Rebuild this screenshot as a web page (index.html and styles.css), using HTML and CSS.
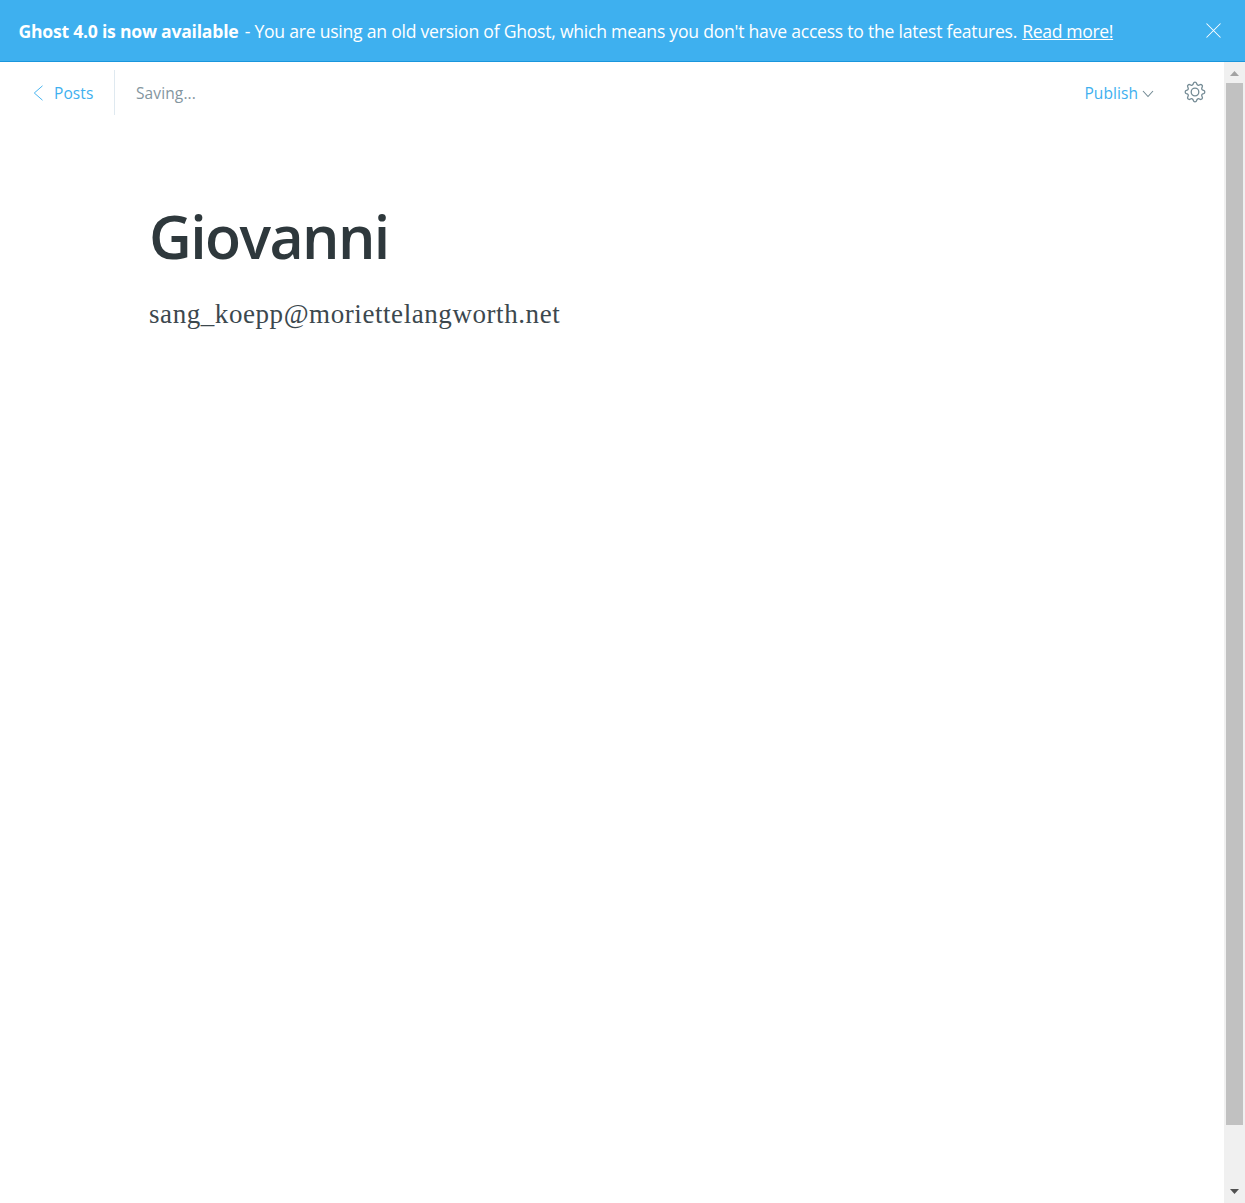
FILE: index.html
```html
<!DOCTYPE html>
<html lang="en">
<head>
<meta charset="utf-8">
<title>Giovanni - Ghost editor</title>
<link rel="stylesheet" href="styles.css">
</head>
<body>
<aside class="alert">
  <p class="alert-text"><strong class="alert-lead">Ghost 4.0 is now available</strong> <span class="alert-body">- You are using an old version of Ghost, which means you don't have access to the latest features.</span> <a class="alert-link" href="#">Read more!</a></p>
  <button class="alert-close" aria-label="Close"><svg width="17" height="17" viewBox="0 0 17 17"><path d="M1.5 1.5l14 14M15.5 1.5l-14 14"/></svg></button>
</aside>
<div class="viewport">
  <main class="editor">
    <header class="toolbar">
      <a class="back" href="#"><svg class="back-icon" width="11" height="16" viewBox="0 0 11 16"><path d="M9.5 .8L1.3 8l8.2 7.2"/></svg><span class="label">Posts</span></a>
      <span class="status label">Saving...</span>
      <button class="publish"><span class="label">Publish</span><svg class="publish-icon" width="12" height="8" viewBox="0 0 12 8"><path d="M1 1l5 5.5L11 1"/></svg></button>
      <button class="settings" aria-label="Settings"><svg width="22" height="22" viewBox="-11 -11 22 22"><circle r="3.8"/><path d="M-1.6-8.6Q-1.3-9.8 0-9.8Q1.3-9.8 1.6-8.6C2-6.7 3.4-6.2 4.9-7.2Q6-7.9 6.9-6.9Q7.9-6 7.2-4.9C6.2-3.4 6.7-2 8.6-1.6Q9.8-1.3 9.8 0Q9.8 1.3 8.6 1.6C6.7 2 6.2 3.4 7.2 4.9Q7.9 6 6.9 6.9Q6 7.9 4.9 7.2C3.4 6.2 2 6.7 1.6 8.6Q1.3 9.8 0 9.8Q-1.3 9.8-1.6 8.6C-2 6.7-3.4 6.2-4.9 7.2Q-6 7.9-6.9 6.9Q-7.9 6-7.2 4.9C-6.2 3.4-6.7 2-8.6 1.6Q-9.8 1.3-9.8 0Q-9.8-1.3-8.6-1.6C-6.7-2-6.2-3.4-7.2-4.9Q-7.9-6-6.9-6.9Q-6-7.9-4.9-7.2C-3.4-6.2-2-6.7-1.6-8.6Z"/></svg></button>
    </header>
    <article class="post">
      <h1 class="title"><span>Giovanni</span></h1>
      <p class="content"><span>sang_koepp@moriettelangworth.net</span></p>
    </article>
  </main>
  <div class="scrollbar">
    <svg class="arrow-up" width="9" height="5" viewBox="0 0 9 5"><path d="M0 5L4.5 0L9 5z"/></svg>
    <div class="thumb"></div>
    <svg class="arrow-down" width="9" height="5" viewBox="0 0 9 5"><path d="M0 0h9L4.5 5z"/></svg>
  </div>
</div>
</body>
</html>
```
FILE: styles.css
```css
* { box-sizing: border-box; }
body {
  margin: 0;
  height: 100vh;
  display: flex;
  flex-direction: column;
  overflow: hidden;
  background: #fff;
  font-family: "Open Sans", "Noto Sans", sans-serif;
}
button { padding: 0; border: 0; background: none; font: inherit; }
svg { display: block; fill: none; }

.alert {
  flex: none;
  height: 62px;
  display: flex;
  align-items: center;
  justify-content: space-between;
  padding: 0 23px 0 18.5px;
  background: #3eb0ef;
  border-bottom: 1px solid #1a96dc;
  color: #fff;
}
.alert-text { margin: 0; font-size: 17.6px; line-height: 24px; white-space: nowrap; letter-spacing: -.36px; }
.alert-lead { font-weight: 700; letter-spacing: -.24px; }
.alert-body { margin-left: 2px; letter-spacing: -.24px; }
.alert-link { margin-left: 1px; color: #fff; text-decoration-thickness: 1px; text-underline-offset: 1px; }
.alert-close svg { stroke: #fff; stroke-width: 1.05; }

.viewport { flex: 1; min-height: 0; display: flex; }
.editor { flex: 1; }
.toolbar {
  display: flex;
  align-items: center;
  height: 61px;
  padding: 0 18px 0 33px;
  font-size: 15.5px;
}
.label { padding-top: 1px; }
.back {
  display: flex;
  align-items: center;
  gap: 10px;
  width: 82px;
  height: 45px;
  border-right: 1px solid #dfe9f0;
  color: #3eb0ef;
  letter-spacing: .08px;
  text-decoration: none;
}
.back-icon { stroke: #3eb0ef; stroke-width: .95; }
.status { margin-left: 21px; color: #8496a0; letter-spacing: .12px; }
.publish { display: flex; align-items: center; gap: 4px; margin-left: auto; color: #3eb0ef; letter-spacing: .08px; }
.publish-icon { margin-top: 2px; stroke: #738a94; stroke-width: 1.1; }
.settings { margin: 0 0 1px 30px; }
.settings svg { stroke: #738a94; stroke-width: 1.3; }

.post { padding: 75px 150px 0 149px; }
.title { margin: 0; font-size: 59px; font-weight: 600; line-height: 76px; color: #2e383c; letter-spacing: -1.6px; }
.content { margin: 20px 0 0; font-family: Georgia, "Liberation Serif", serif; font-size: 27px; line-height: 40px; color: #3c484e; letter-spacing: .57px; }

.scrollbar {
  flex: none;
  width: 21px;
  display: flex;
  flex-direction: column;
  align-items: center;
  padding: 9px 0;
  background: #f0f0f0;
}
.arrow-up { fill: #a2a2a2; }
.arrow-down { margin-top: auto; fill: #505050; }
.thumb { width: 17px; height: 1042px; margin-top: 7px; background: #c1c1c1; }
```
